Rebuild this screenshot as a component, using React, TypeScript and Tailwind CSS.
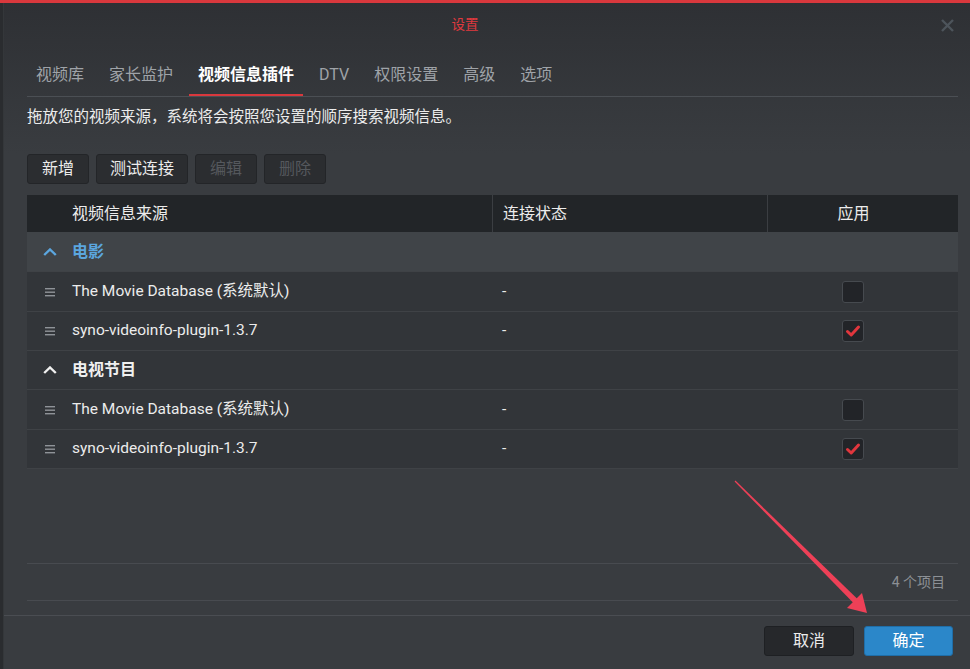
import React from "react";

const font = "font-['Roboto','Noto_Sans_CJK_SC',sans-serif]";

function Handle() {
  return (
    <svg width="10" height="10" viewBox="0 0 10 10" className="shrink-0">
      <rect x="0" y="1" width="10" height="1.4" fill="#8f9398" />
      <rect x="0" y="4.5" width="10" height="1.4" fill="#8f9398" />
      <rect x="0" y="8" width="10" height="1.4" fill="#8f9398" />
    </svg>
  );
}

function Chevron({ color }: { color: string }) {
  return (
    <svg width="14" height="8" viewBox="0 0 14 8" className="shrink-0">
      <path d="M1.2 7 L7 1.5 L12.8 7" fill="none" stroke={color} strokeWidth="2.4" />
    </svg>
  );
}

function Checkbox({ checked }: { checked: boolean }) {
  return (
    <div className="w-[22px] h-[22px] rounded-[3px] bg-[#222428] border border-[#464a4f] flex items-center justify-center">
      {checked && (
        <svg width="16" height="14" viewBox="0 0 16 14">
          <path d="M2.5 7.5 L6.2 11 L13.5 3" fill="none" stroke="#e0363d" strokeWidth="3" strokeLinecap="round" strokeLinejoin="round" />
        </svg>
      )}
    </div>
  );
}

function DataRow({ name, checked, h }: { name: string; checked: boolean; h: string }) {
  return (
    <div className={`flex ${h} bg-[#323539] border-b border-[#3f4246] items-center`}>
      <div className="w-[465px] flex items-center pl-[18px] shrink-0">
        <Handle />
        <span className="ml-[17px] text-[15.5px] text-[#ececec]">{name}</span>
      </div>
      <div className="w-[275px] pl-[10px] text-[15.5px] text-[#ececec] shrink-0">-</div>
      <div className="flex-1 flex justify-center pr-[19px]">
        <Checkbox checked={checked} />
      </div>
    </div>
  );
}

function GroupRow({ name, active, h }: { name: string; active: boolean; h: string }) {
  return (
    <div className={`flex ${h} ${active ? "bg-[#404448]" : "bg-[#323539]"} border-b border-[#3f4246] items-center pl-[16px]`}>
      <Chevron color={active ? "#5ba6df" : "#f0f0f0"} />
      <span className={`ml-[15px] text-[16px] font-bold ${active ? "text-[#5ba6df]" : "text-[#f0f0f0]"}`}>{name}</span>
    </div>
  );
}

export default function App() {
  const tabs = ["视频库", "家长监护", "视频信息插件", "DTV", "权限设置", "高级", "选项"];
  return (
    <div className={`relative w-[970px] h-[669px] overflow-hidden flex bg-[#393c40] border-t-[3px] border-[#d9383d] ${font}`}>
      <div className="w-[4px] shrink-0 bg-[#2a2c2f] border-r border-[#34373a]" />
      <div className="flex-1 flex flex-col bg-[linear-gradient(to_bottom,#2e3034_0px,#393c40_150px)]">
        {/* title */}
        <div className="relative h-[42px] shrink-0 flex items-center justify-center pr-[44px]">
          <span className="text-[13.5px] text-[#e0393e]">设置</span>
          <svg width="13" height="13" viewBox="0 0 13 13" className="absolute right-[16px] top-[16px]">
            <path d="M1 1 L12 12 M12 1 L1 12" stroke="#4d545b" strokeWidth="2.4" />
          </svg>
        </div>
        {/* tabs */}
        <div className="ml-[23px] mr-[12px] h-[52px] shrink-0 flex items-end gap-[7px] border-b border-[#4b4f54]">
          {tabs.map((t, i) => (
            <div
              key={t}
              className={`h-[41px] px-[9px] flex items-center border-b-2 text-[16px] ${
                i === 2 ? "border-[#d9383d] text-white font-bold" : "border-transparent text-[#9fa3a8]"
              }`}
            >
              {t}
            </div>
          ))}
        </div>
        {/* description */}
        <div className="ml-[23px] mt-[8px] h-[24px] leading-[24px] text-[15.5px] text-[#ececec] shrink-0">
          拖放您的视频来源，系统将会按照您设置的顺序搜索视频信息。
        </div>
        {/* toolbar */}
        <div className="ml-[23px] mt-[25px] flex gap-[7px] shrink-0">
          {[
            { t: "新增", w: "w-[62px]", d: false },
            { t: "测试连接", w: "w-[92px]", d: false },
            { t: "编辑", w: "w-[62px]", d: true },
            { t: "删除", w: "w-[62px]", d: true },
          ].map((b) => (
            <div
              key={b.t}
              className={`${b.w} h-[30px] rounded-[3px] bg-[#2b2d30] border border-[#232528] flex items-center justify-center text-[16px] ${
                b.d ? "text-[#55585d]" : "text-[#ececec]"
              }`}
            >
              {b.t}
            </div>
          ))}
        </div>
        {/* table */}
        <div className="ml-[23px] mr-[12px] mt-[11px] mb-[14px] flex-1 flex flex-col">
          <div className="flex h-[37px] bg-[#222528] items-center text-[16px] text-[#ececec] shrink-0">
            <div className="w-[465px] pl-[45px] shrink-0">视频信息来源</div>
            <div className="w-[275px] h-full flex items-center pl-[10px] border-l border-[#3b3e42] shrink-0">连接状态</div>
            <div className="flex-1 h-full flex items-center justify-center pr-[19px] border-l border-[#3b3e42]">应用</div>
          </div>
          <GroupRow name="电影" active h="h-[40px]" />
          <DataRow name="The Movie Database (系统默认)" checked={false} h="h-[40px]" />
          <DataRow name="syno-videoinfo-plugin-1.3.7" checked h="h-[39px]" />
          <GroupRow name="电视节目" active={false} h="h-[39px]" />
          <DataRow name="The Movie Database (系统默认)" checked={false} h="h-[40px]" />
          <DataRow name="syno-videoinfo-plugin-1.3.7" checked h="h-[39px]" />
          <div className="flex-1" />
          <div className="h-[38px] shrink-0 border-t border-b border-[#484b50] flex items-center justify-end pr-[13px] text-[14px] text-[#8c9095]">
            4 个项目
          </div>
        </div>
        {/* footer */}
        <div className="h-[54px] shrink-0 border-t border-[#4a4d52] flex justify-end items-start pt-[10px] pr-[17px] gap-[10px]">
          <div className="w-[90px] h-[30px] rounded-[3px] bg-[#26282b] border border-[#1e2023] flex items-center justify-center text-[16px] text-[#ececec]">
            取消
          </div>
          <div className="w-[89px] h-[30px] rounded-[3px] bg-[#2b87c9] border border-[#1f6ea8] flex items-center justify-center text-[16px] text-white">
            确定
          </div>
        </div>
      </div>
      {/* annotation arrow */}
      <svg className="absolute left-0 top-[-3px] pointer-events-none" width="970" height="669" viewBox="0 0 970 669">
        <polygon points="734.6,481.4 735.4,480.6 859.3,600.7 854.7,604.3" fill="#ee4057" />
        <polygon points="867,613 847,608 862,593" fill="#ee4057" />
      </svg>
    </div>
  );
}
